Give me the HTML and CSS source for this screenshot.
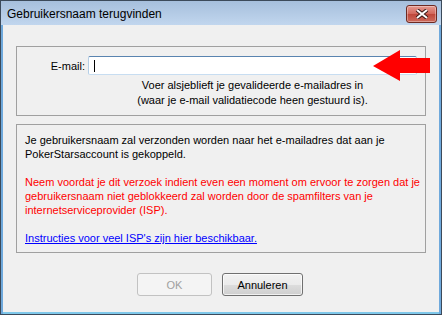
FILE: index.html
```html
<!DOCTYPE html>
<html lang="nl">
  <head>
    <meta charset="UTF-8" />
    <title>Gebruikersnaam terugvinden</title>
    <link rel="stylesheet" href="styles.css">
  </head>
  <body>
    <div class="window">
      <div class="titlebar">
        <span class="title">Gebruikersnaam terugvinden</span>
        <button class="close" type="button">
          <svg width="14" height="10" viewBox="0 0 14 10">
            <path d="M2 1 L12 9 M12 1 L2 9" stroke="#3a1a18" stroke-width="4" />
            <path d="M2 1 L12 9 M12 1 L2 9" stroke="#fff" stroke-width="2" />
          </svg>
        </button>
      </div>

      <div class="client">
        <div class="group email-group">
          <div class="email-row">
            <label for="email">E-mail:</label>
            <div class="input" id="email"><span class="caret"></span></div>
          </div>
          <p class="hint">Voer alsjeblieft je gevalideerde e-mailadres in<br>(waar je e-mail validatiecode heen gestuurd is).</p>
          <!-- red pointer on top of the field -->
          <svg class="arrow" width="60" height="34" viewBox="0 0 60 34">
            <polygon points="0,16 27,0 27,8 57,8 57,23 27,23 27,31" fill="#ff0000" />
          </svg>
        </div>

        <div class="group info">
          <p>Je gebruikersnaam zal verzonden worden naar het e-mailadres dat aan je PokerStarsaccount is gekoppeld.</p>
          <p class="warn">Neem voordat je dit verzoek indient even een moment om ervoor te zorgen dat je gebruikersnaam niet geblokkeerd zal worden door de spamfilters van je internetserviceprovider (ISP).</p>
          <p><a href="#">Instructies voor veel ISP's zijn hier beschikbaar.</a></p>
        </div>

        <div class="buttons">
          <button class="btn ok" type="button" disabled>OK</button>
          <button class="btn cancel" type="button">Annuleren</button>
        </div>
      </div>
    </div>
  </body>
</html>
```

FILE: styles.css
```css
* {
  margin: 0;
  padding: 0;
  box-sizing: border-box;
}

body {
  background: #fff;
  font-family: "Liberation Sans", Arial, sans-serif;
  font-size: 11px;
}

.window {
  width: 442px;
  height: 315px;
  display: flex;
  flex-direction: column;
  border: 1px solid #3c4a5a;
  background: #6fa9dc;
}

.titlebar {
  height: 24px;
  display: flex;
  align-items: center;
  justify-content: space-between;
  padding: 0 4px 0 6px;
  background: linear-gradient(#a6bfdc, #c1d6ee);
}

.title {
  font-size: 12px;
  color: #000;
  margin-top: 2px;
}

.close {
  width: 31px;
  height: 18px;
  margin-top: 2px;
  display: flex;
  align-items: center;
  justify-content: center;
  border: 1px solid #6e2a22;
  border-radius: 3px;
  background: linear-gradient(#e59a8f, #d2665a 50%, #c0473a 51%, #cd6a5c);
  box-shadow: inset 0 0 0 1px rgba(255, 255, 255, 0.35);
}

.client {
  flex: 1;
  margin: 0 2px;
  background: #f0f0f0;
  padding: 21px 13px 0 13px;
  display: flex;
  flex-direction: column;
  border-bottom: 2px solid #7fc8ea;
}

.group {
  border: 1px solid #a0a0a0;
}

.email-group {
  position: relative;
  height: 70px;
  padding-top: 9px;
}

.email-row {
  display: flex;
  align-items: center;
}

.email-row label {
  width: 71px;
  padding-right: 3px;
  text-align: right;
}

.input {
  width: 329px;
  height: 19px;
  background: #fff;
  border: 1px solid;
  border-color: #5a84b0 #b5cfe7 #c7ddf1 #b5cfe7;
  border-radius: 2px;
  padding: 3px 0 0 5px;
}

.caret {
  display: block;
  width: 1px;
  height: 12px;
  background: #000;
}

.hint {
  margin: 3px 0 0 71px;
  width: 329px;
  text-align: center;
  line-height: 15px;
}

.arrow {
  position: absolute;
  left: 356px;
  top: 3px;
}

.info {
  margin-top: 8px;
  height: 129px;
  padding: 8px 0 0 8px;
  line-height: 14px;
}

.info p {
  margin-bottom: 14px;
}

.warn {
  color: #ff0000;
}

.info a {
  color: #0000ff;
}

.buttons {
  display: flex;
  justify-content: center;
  gap: 10px;
  margin-top: 20px;
  padding-right: 2px;
}

.btn {
  height: 23px;
  font-family: "Liberation Sans", Arial, sans-serif;
  font-size: 11px;
  border-radius: 3px;
}

.ok {
  width: 75px;
  color: #a0a0a0;
  background: #f4f4f4;
  border: 1px solid #c2c2c2;
}

.cancel {
  width: 81px;
  color: #000;
  border: 1px solid #707070;
  background: linear-gradient(#f2f2f2, #ebebeb 50%, #dddddd 51%, #cfcfcf);
  box-shadow: inset 0 0 0 1px rgba(255, 255, 255, 0.7);
}
```
